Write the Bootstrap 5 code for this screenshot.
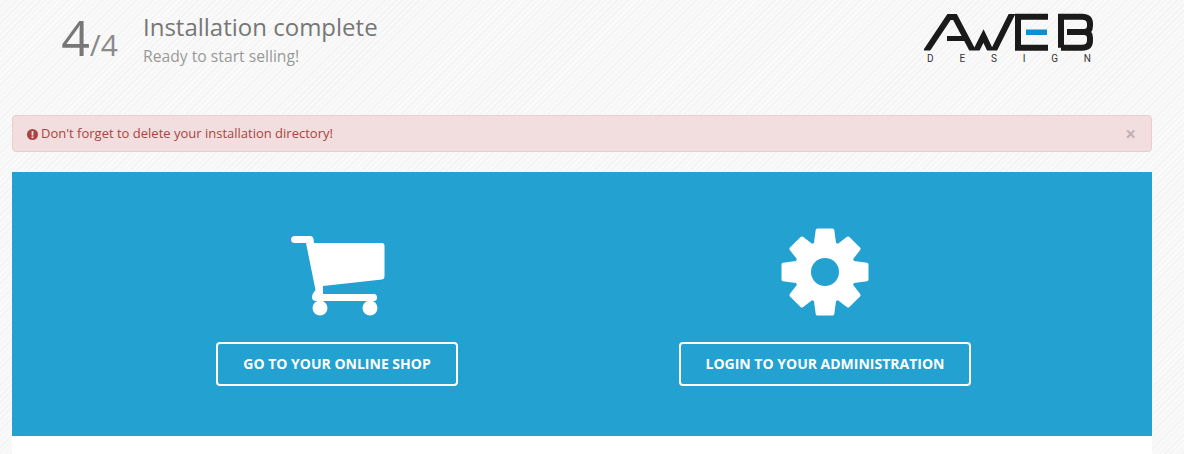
<!DOCTYPE html>
<html lang="en">
<head>
    <meta charset="UTF-8">
    <meta name="viewport" content="width=device-width, initial-scale=1">
    <title>Installation complete</title>
    <link href="https://cdn.jsdelivr.net/npm/bootstrap@5.3.0/dist/css/bootstrap.min.css" rel="stylesheet">
    <style>
        body {
            font-family: "Open Sans", sans-serif;
            background-color: #f7f7f7;
            background-image: repeating-linear-gradient(135deg, #f3f3f3 0 1px, #f9f9f9 1px 4px);
            height: 454px;
            overflow: hidden;
        }
        .page-wrap { width: 1140px; margin-left: 12px; }
        .step-head { height: 115px; }
        .step-count { width: 122px; padding-top: 3px; color: #777; }
        .step-num { font-size: 50px; line-height: 68px; }
        .step-total { font-size: 30px; color: #8a8a8a; }
        .step-info { padding-left: 9px; }
        .step-title { font-size: 24px; line-height: 33px; color: #777; padding-top: 10px; }
        .step-sub { font-size: 15.7px; line-height: 22px; color: #999; margin-top: 2px; }
        .logo-box { width: 170px; margin-right: 58px; padding-top: 13px; }
        .logo-box svg { display: block; }
        .logo-sub { font-family: Roboto, sans-serif; font-size: 10px; line-height: 10px; color: #333; padding: 1px 3px 0 3px; }
        .alert-install {
            height: 37px;
            padding: 1px 15px 0 14px;
            margin-bottom: 20px;
            font-size: 13px;
            color: #a94442;
            background: #f2dede;
            border: 1px solid #ebccd1;
            border-radius: 4px;
        }
        .alert-icon { margin-right: 3px; }
        .alert-close { font-size: 19px; font-weight: 700; line-height: 1; color: #c0b2b2; }
        .hero { background: #23a1d1; height: 264px; padding: 0 83px 0 81px; }
        .hero-col { padding-top: 56px; }
        .hero-icon { height: 88px; display: block; margin: 0 auto; }
        .btn-hero {
            margin-top: 26px;
            height: 44px;
            line-height: 40px;
            padding: 0 25px;
            color: #fff;
            font-size: 14px;
            font-weight: 700;
            text-transform: uppercase;
            background: transparent;
            border: 2px solid #fff;
            border-radius: 4px;
        }
        .btn-hero:hover { color: #23a1d1; background: #fff; border-color: #fff; }
        .below-hero { background: #fff; height: 30px; }
    </style>
</head>
<body>
    <div class="page-wrap">
        <!-- step header -->
        <div class="step-head d-flex">
            <div class="step-count text-end pe-3">
                <span class="step-num">4</span><span class="step-total">/4</span>
            </div>
            <div class="step-info flex-grow-1">
                <div class="step-title">Installation complete</div>
                <div class="step-sub">Ready to start selling!</div>
            </div>
            <div class="logo-box">
                <svg width="170" height="40" viewBox="0 0 170 40" fill="none" stroke="#1a1a1a" stroke-width="6" role="img" aria-label="AWEB">
                    <clipPath id="logo-clip"><rect x="0" y="1" width="170" height="36.500"/></clipPath>
                    <g clip-path="url(#logo-clip)">
                        <path d="M-1 43 L25 4 H31 L50.500 41 L59.500 23 L68 41 L89 -1"/>
                    </g>
                    <path d="M23 25.500 H41" stroke-width="5"/>
                    <path d="M124 3.800 H94 V34.700 H124"/>
                    <path d="M137 34.700 V3.800 H158 Q166 3.800 166 11 V12.500 Q166 19 160 19 H143"/>
                    <path d="M160 19 Q166 19 166 25 V27.500 Q166 34.700 158 34.700 H137"/>
                    <rect x="102" y="16.500" width="21" height="5.500" fill="#0d8fd0" stroke="none"/>
                </svg>
                <div class="logo-sub d-flex justify-content-between"><span>D</span><span>E</span><span>S</span><span>I</span><span>G</span><span>N</span></div>
            </div>
        </div>

        <!-- warning -->
        <div class="alert-install d-flex align-items-center justify-content-between" role="alert">
            <span><svg width="11" height="11" viewBox="0 0 11 11" class="alert-icon"><circle cx="5.500" cy="5.500" r="5.500" fill="#a94442"/><rect x="4.600" y="2" width="1.800" height="4.600" fill="#f2dede"/><rect x="4.600" y="7.400" width="1.800" height="1.800" fill="#f2dede"/></svg>Don't forget to delete your installation directory!</span>
            <span class="alert-close">×</span>
        </div>

        <!-- actions -->
        <div class="hero row g-0">
            <div class="col-6 text-center hero-col">
                <svg class="hero-icon" width="96" viewBox="-2 -8 96 88" fill="#fff">
                    <path d="M4 0 H19 Q22 0 22.500 3 L23 7 H91 Q93.500 7 93.500 10 V40 Q93.500 43 91 43.500 L32 50 V58 H83 Q86 58 86 61.500 Q86 65 83 65 H25 Q21 65 21 61 Q21 58 24.500 54 L15 7 H4 Q0 7 0 3.500 Q0 0 4 0 Z"/>
                    <circle cx="29" cy="72" r="7.500"/>
                    <circle cx="79" cy="72" r="7.500"/>
                </svg>
                <a href="#" class="btn btn-hero">Go to your online shop</a>
            </div>
            <div class="col-6 text-center hero-col">
                <svg class="hero-icon" width="88" viewBox="0 0 88 88">
                    <g fill="#fff">
                        <circle cx="44" cy="44" r="31"/>
                        <path id="gear-tooth" d="M36.500 0.500 H51.500 Q53 0.500 53.300 2 L55 15 H33 L34.700 2 Q35 0.500 36.500 0.500 Z"/>
                        <use href="#gear-tooth" transform="rotate(45 44 44) translate(0 1.500)"/>
                        <use href="#gear-tooth" transform="rotate(90 44 44)"/>
                        <use href="#gear-tooth" transform="rotate(135 44 44) translate(0 1.500)"/>
                        <use href="#gear-tooth" transform="rotate(180 44 44)"/>
                        <use href="#gear-tooth" transform="rotate(225 44 44) translate(0 1.500)"/>
                        <use href="#gear-tooth" transform="rotate(270 44 44)"/>
                        <use href="#gear-tooth" transform="rotate(315 44 44) translate(0 1.500)"/>
                    </g>
                    <circle cx="44" cy="44" r="14" fill="#23a1d1"/>
                </svg>
                <a href="#" class="btn btn-hero">Login to your administration</a>
            </div>
        </div>
        <div class="below-hero"></div>
    </div>
    <script src="https://cdn.jsdelivr.net/npm/bootstrap@5.3.0/dist/js/bootstrap.bundle.min.js"></script>
</body>
</html>
